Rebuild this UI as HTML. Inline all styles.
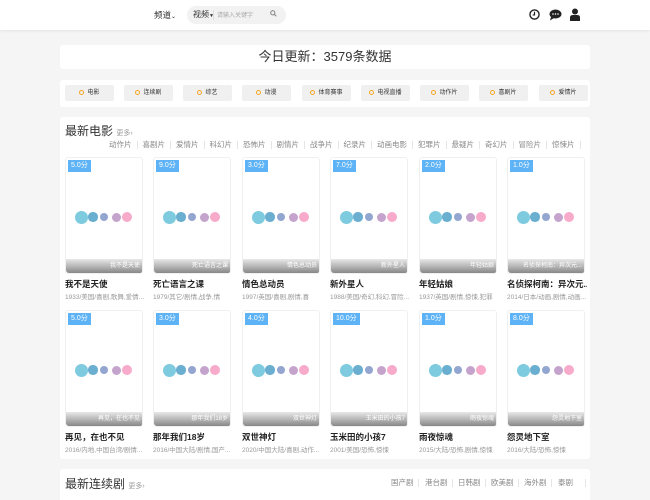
<!DOCTYPE html>
<html><head><meta charset="utf-8"><style>
*{margin:0;padding:0;box-sizing:border-box}
html{height:500px;overflow:hidden}
body{width:650px;height:500px;overflow:hidden;background:#f5f5f5;font-family:"Liberation Sans","Noto Sans CJK SC",sans-serif;position:relative}
.hd{position:absolute;left:0;top:0;width:650px;height:30px;background:#fff;box-shadow:0 1px 3px rgba(0,0,0,.08)}
.abs{position:absolute}
.box{position:absolute;left:60px;width:530px;background:#fff;border-radius:3px}
.nb{position:absolute;top:5px;width:49px;height:16px;background:#f0f0f0;border-radius:2px;font-size:6px;color:#333;line-height:16px;text-align:center}
.nb i{display:inline-block;width:5px;height:5px;border:1.3px solid #f5a623;border-radius:50%;margin-right:3px;vertical-align:-0.5px}
.tag{position:absolute;top:140px;font-size:7.5px;color:#888;line-height:10px;white-space:nowrap}
.card{position:absolute;width:78px}
.pst{position:absolute;left:0;top:0;width:78px;height:117px;background:#fff;border:1px solid #f0f0f0;border-radius:3px;overflow:hidden}
.bdg{position:absolute;left:2px;top:2px;background:#5db3f5;color:#fff;font-size:7px;line-height:12px;padding:0 3px;white-space:nowrap}
.ov{position:absolute;left:0;bottom:0;width:78px;height:14px;background:linear-gradient(#e8e8e8,#888);color:#fff;font-size:6px;line-height:14px;text-align:right;padding-right:4px;border-radius:0 0 3px 3px;white-space:nowrap;overflow:hidden}
.dt{position:absolute;border-radius:50%}
.tt{position:absolute;top:121px;left:0;font-size:8.5px;color:#222;font-weight:bold;white-space:nowrap;width:80px;overflow:hidden}
.mt{position:absolute;top:134px;left:0;font-size:6.5px;color:#999;white-space:nowrap;width:80px;overflow:hidden}
</style></head><body>
<div class="hd">
<div class="abs" style="left:154px;top:9px;font-size:8.5px;color:#333">频道<span style="font-size:6px">⌄</span></div>
<div class="abs" style="left:187px;top:6px;width:99px;height:18px;background:#f2f2f2;border-radius:9px"></div>
<div class="abs" style="left:193px;top:9px;font-size:8px;color:#333">视频<span style="font-size:5px">▼</span></div>
<div class="abs" style="left:213px;top:10px;width:1px;height:10px;background:#ddd"></div>
<div class="abs" style="left:217px;top:10px;font-size:6px;color:#aaa">请输入关键字</div>
<svg class="abs" style="left:270px;top:10px" width="7" height="7" viewBox="0 0 10 10"><circle cx="4" cy="4" r="3" fill="none" stroke="#888" stroke-width="1.5"/><path d="M6.3 6.3L9 9" stroke="#888" stroke-width="1.5"/></svg>
<svg class="abs" style="left:529px;top:9px" width="11" height="11" viewBox="0 0 12 12"><circle cx="6" cy="6" r="5" fill="none" stroke="#222" stroke-width="1.5"/><path d="M6 3v3.5H4" fill="none" stroke="#222" stroke-width="1.3"/></svg>
<svg class="abs" style="left:549px;top:9px" width="13" height="12" viewBox="0 0 13 12"><ellipse cx="6.5" cy="5" rx="6" ry="4.5" fill="#222"/><path d="M2 8L1 11.5 5 9z" fill="#222"/><circle cx="4" cy="5" r=".8" fill="#fff"/><circle cx="6.5" cy="5" r=".8" fill="#fff"/><circle cx="9" cy="5" r=".8" fill="#fff"/></svg>
<svg class="abs" style="left:570px;top:8px" width="10" height="13" viewBox="0 0 10 13"><circle cx="5" cy="3.5" r="3" fill="#222"/><path d="M0 13V9.5Q0 7 3 7h4q3 0 3 2.5V13z" fill="#222"/></svg>
</div>
<div class="box" style="top:45px;height:24px;text-align:center;font-size:13px;line-height:24px;color:#333">今日更新：3579条数据</div>
<div class="box" style="top:80px;height:27px">
<div class="nb" style="left:5px"><i></i>电影</div>
<div class="nb" style="left:64px"><i></i>连续剧</div>
<div class="nb" style="left:123px"><i></i>综艺</div>
<div class="nb" style="left:182px"><i></i>动漫</div>
<div class="nb" style="left:242px"><i></i>体育赛事</div>
<div class="nb" style="left:301px"><i></i>电视直播</div>
<div class="nb" style="left:360px"><i></i>动作片</div>
<div class="nb" style="left:419px"><i></i>喜剧片</div>
<div class="nb" style="left:479px"><i></i>爱情片</div>
</div>
<div class="box" style="top:117px;height:342px"></div>
<div class="abs" style="left:65px;top:122px;font-size:12px;color:#333">最新电影 <span style="font-size:7px;color:#999">更多›</span></div>
<div id="tags"></div>
<div id="cards"></div>
<div class="box" style="top:469px;height:31px;border-radius:3px 3px 0 0"></div>
<div class="abs" style="left:65px;top:475px;font-size:12px;color:#333">最新连续剧 <span style="font-size:7px;color:#999">更多›</span></div>
<div id="tags2"></div>
<script>
var t=["动作片","喜剧片","爱情片","科幻片","恐怖片","剧情片","战争片","纪录片","动画电影","犯罪片","悬疑片","奇幻片","冒险片","惊悚片"],h="",x=109;
t.forEach(function(s){h+='<div class="tag" style="left:'+x+'px">'+s+'</div><div class="abs" style="left:'+(x+s.length*7.5+5)+'px;top:141px;width:1px;height:8px;background:#e5e5e5"></div>';x+=s.length*7.5+11;});
document.getElementById("tags").innerHTML=h;
var t2=["国产剧","港台剧","日韩剧","欧美剧","海外剧","泰剧"],h2="",xs=[391,425,458,491,524,558];
t2.forEach(function(s,i){h2+='<div class="tag" style="top:478px;left:'+xs[i]+'px">'+s+'</div><div class="abs" style="left:'+(xs[i]+27)+'px;top:479px;width:1px;height:8px;background:#e5e5e5"></div>';});
document.getElementById("tags2").innerHTML=h2;
var d=[["5.0分","我不是天使","1933/美国/喜剧,歌舞,爱情..."],["9.0分","死亡语言之课","1979/其它/剧情,战争,情"],["3.0分","情色总动员","1997/英国/喜剧,剧情,喜"],["7.0分","新外星人","1988/美国/奇幻,科幻,冒险..."],["2.0分","年轻姑娘","1937/英国/剧情,惊悚,犯罪"],["1.0分","名侦探柯南：异次元...","2014/日本/动画,剧情,动画..."],["5.0分","再见，在也不见","2016/内地,中国台湾/剧情..."],["3.0分","那年我们18岁","2016/中国大陆/剧情,国产..."],["4.0分","双世神灯","2020/中国大陆/喜剧,动作..."],["10.0分","玉米田的小孩7","2001/美国/恐怖,惊悚"],["1.0分","雨夜惊魂","2015/大陆/恐怖,剧情,惊悚"],["8.0分","怨灵地下室","2016/大陆/恐怖,惊悚"]];
var c="",dots=[[15,59,6.5,"#7ecbe0"],[27,59,4.7,"#6aaed0"],[38,59,4.2,"#93a6cf"],[50,59,4.5,"#c4a4cd"],[61,59,5,"#f7aac9"]];
d.forEach(function(v,i){var L=65+Math.round((i%6)*88.4),T=i<6?157:310;
c+='<div class="card" style="left:'+L+'px;top:'+T+'px"><div class="pst"><div class="bdg">'+v[0]+'</div>';
dots.forEach(function(q){c+='<div class="dt" style="left:'+(q[0]-q[2])+'px;top:'+(q[1]-q[2])+'px;width:'+2*q[2]+'px;height:'+2*q[2]+'px;background:'+q[3]+'"></div>';});
c+='<div class="ov">'+v[1]+'</div></div><div class="tt">'+v[1]+'</div><div class="mt">'+v[2]+'</div></div>';});
document.getElementById("cards").innerHTML=c;
</script>
</body></html>
